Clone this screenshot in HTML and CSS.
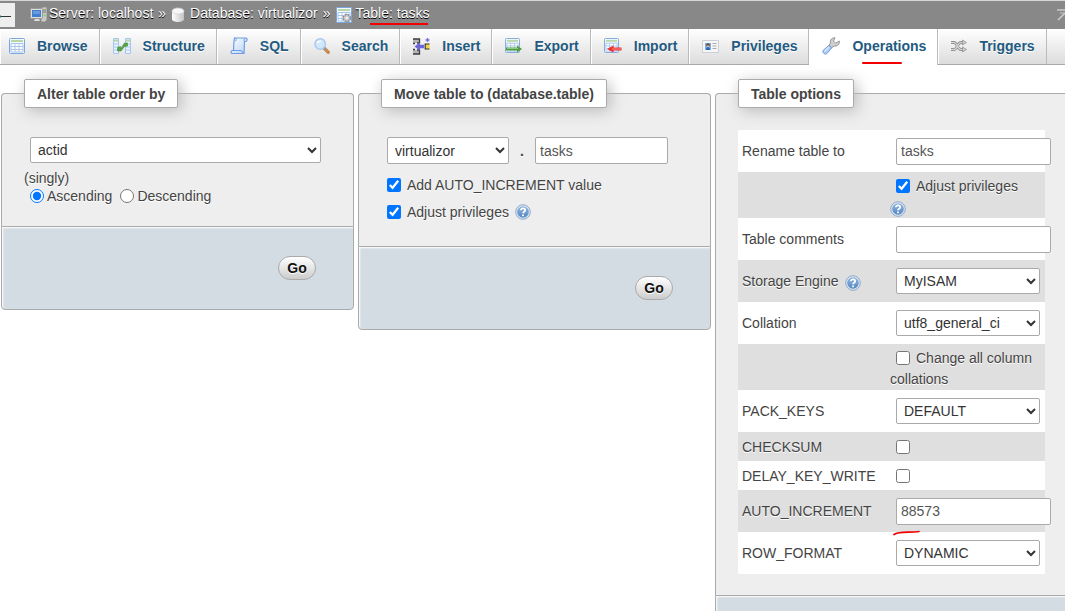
FILE: index.html
```
<!DOCTYPE html>
<html lang="en">
<head>
<meta charset="utf-8">
<title>Table: tasks - Operations</title>
<link rel="stylesheet" href="styles.css">
</head>
<body>
<svg class="defs" aria-hidden="true">
  <defs>
    <linearGradient id="helpFill" x1="0" y1="0" x2="0" y2="1"><stop offset="0" stop-color="#8fb5e0"/><stop offset="1" stop-color="#5688c2"/></linearGradient>
    <linearGradient id="blueFill" x1="0" y1="0" x2="1" y2="1"><stop offset="0" stop-color="#ffffff"/><stop offset="1" stop-color="#b5d3f7"/></linearGradient>
    <linearGradient id="dbFill" x1="0" y1="0" x2="1" y2="0"><stop offset="0" stop-color="#ffffff"/><stop offset="1" stop-color="#c4c4c4"/></linearGradient>
    <symbol id="help" viewBox="0 0 16 16">
      <circle cx="8" cy="8" r="7.3" fill="#dce7f3" stroke="#8fa9c9"/>
      <circle cx="8" cy="8" r="5.8" fill="url(#helpFill)"/>
      <path d="M5.8 6.3C5.8 3.7 10.2 3.7 10.2 6.3C10.2 7.8 8 7.7 8 9.3" fill="none" stroke="#fff" stroke-width="1.7"/>
      <rect x="7.1" y="10.5" width="1.8" height="1.7" fill="#fff"/>
    </symbol>
    <symbol id="grid" viewBox="0 0 16 16">
      <rect x=".5" y=".5" width="15" height="15" rx="1" fill="#f4f9ff" stroke="#7ba7dc"/>
      <rect x="2" y="2" width="12" height="2" fill="#b9d6a6"/>
      <path d="M2 5.5h12v8.5H2zM2 8.5h12M2 11.5h12M6 5.5v8.5M10 5.5v8.5" fill="#fff" stroke="#a9c6ea"/>
    </symbol>
  </defs>
</svg>
<div class="page">
  <header class="topbar">
    <a class="back" href="#" aria-label="Hide navigation panel">
      <svg width="15" height="24" viewBox="0 0 15 24"><path d="M0 13.5h11" stroke="#333"/><path d="M0 12.5h1v2H0z" fill="#1d7f8f"/></svg>
    </a>
    <nav class="crumbs" aria-label="Breadcrumb">
      <svg width="18" height="16" viewBox="0 0 18 16"><path d="M11 1l2-1h4v13l-2 2h-4z" fill="#c9c9c3" stroke="#85857e" stroke-width=".7"/><path d="M13 3h3M13 5h3" stroke="#777"/><circle cx="14.7" cy="8.5" r=".8" fill="#5d4"/><rect x=".5" y="1.5" width="12" height="10" rx="1" fill="#dededa" stroke="#999"/><rect x="2" y="3" width="9" height="7" fill="#3f7fcd"/><path d="M3 4h7v3H3z" fill="#659bdc"/><path d="M5 12h4l1 2H4z" fill="#ddd"/></svg>
      <a class="server" href="#">Server: localhost</a><span class="sep">»</span>
      <svg class="db" width="14" height="16" viewBox="0 0 14 16"><path d="M1 4v8c0 4 12 4 12 0V4z" fill="url(#dbFill)"/><ellipse cx="7" cy="4" rx="6" ry="3" fill="#f7f7f7" stroke="#d0d0d0" stroke-width=".7"/></svg>
      <a href="#">Database: virtualizor</a><span class="sep">»</span>
      <svg width="16" height="16" viewBox="0 0 16 16"><use href="#grid"/><circle cx="10.8" cy="11" r="3.4" fill="#c7c7c7" stroke="#888" stroke-width="1.8" stroke-dasharray="1.8 .9"/><circle cx="10.8" cy="11" r="2.8" fill="#c7c7c7"/><circle cx="10.8" cy="11" r="1.2" fill="#f5f5f5"/></svg>
      <a class="marked" href="#">Table: tasks<svg class="mark" width="60" height="4" viewBox="0 0 60 4"><path d="M1 2h58" stroke="#f20000" stroke-width="2"/></svg></a>
    </nav>
    <a class="totop" href="#" aria-label="Collapse"><svg width="8" height="12" viewBox="0 0 8 12"><path d="M0 1h8M1 11l7-7" stroke="#c8c8c8" stroke-width="1.6"/><path d="M3 4h5" stroke="#c8c8c8"/></svg></a>
  </header>

  <nav class="tabs" aria-label="Table">
    <a class="tab first" href="#"><svg width="16" height="16"><use href="#grid"/></svg>Browse</a>
    <a class="tab" href="#"><svg width="18" height="16" viewBox="0 0 18 16"><path d="M.5.5h5v15h-5zM12.5.5h5v15h-5z" fill="#eaf3ff" stroke="#a5c7ef"/><path d="M1 2.5h4M13 2.5h4" stroke="#b4d69a" stroke-width="2"/><path d="M1 6h4M1 9h4M1 12h4M13 6h4M13 9h4M13 12h4" stroke="#a5c7ef"/><path d="M4.5 13V9.5l3-1v2.5l4-6h3V8l-3 .5L8 13z" fill="#56a54b" stroke="#3f8c36" stroke-width=".6"/></svg>Structure</a>
    <a class="tab" href="#"><svg width="18" height="18" viewBox="0 0 18 18"><path d="M4.5 1h11.5c1.5 0 1.5 3.5-.5 3.5h-1L14 16.5H2.5c-2 0-1.7-3 0-3h1L4 4z" fill="url(#blueFill)" stroke="#6e9be4" stroke-width="1.2"/><path d="M4.5 1C7 1 6.5 4 5 4M14.5 4.5c-1-1-.5-3 1-3M2.5 13.5H11c1.5 0 1 3 3 3" fill="none" stroke="#6e9be4"/></svg>SQL</a>
    <a class="tab" href="#"><svg width="16" height="16" viewBox="0 0 16 16"><path d="M10 10l4.2 4.2" stroke="#c98b51" stroke-width="3.4" stroke-linecap="round"/><path d="M9.5 9.5l2 2" stroke="#999" stroke-width="2"/><circle cx="6.2" cy="6" r="5.2" fill="#d3e7fb" stroke="#a9c9ed" stroke-width="1.5"/><path d="M3.3 5.3c.5-1.5 2-2.3 3.5-2" stroke="#fff" stroke-width="1.4" fill="none"/></svg>Search</a>
    <a class="tab" href="#"><svg width="17" height="17" viewBox="0 0 17 17"><path d="M0 1h6.5v4H0zM0 12h6.5v4H0z" fill="#b5b5b5"/><path d="M0 1h6.5v4H4M0 16h6.5v-4H4M0 5.5h2M0 11.5h2" fill="none" stroke="#3c3c3c" stroke-width="1.3"/><path d="M1.5 8.5l5.500-4.200v2.500h4v3.400H7v2.500z" fill="#6a65d8"/><path d="M16.500 6h-4.300v5h4.300" fill="#f2d447" stroke="#333" stroke-width="1.200"/><path d="M14.500 0v4M12.500 2h4" stroke="#7670dd" stroke-width="1.400"/></svg>Insert</a>
    <a class="tab" href="#"><svg width="17" height="16" viewBox="0 0 17 16"><use href="#grid" width="15" height="15"/><path d="M1 9.500h11V7.500l5 3.500-5 3.500v-2H1z" fill="#4e9d45"/><path d="M2 10.500h11" stroke="#90c983"/></svg>Export</a>
    <a class="tab" href="#"><svg width="18" height="16" viewBox="0 0 18 16"><use href="#grid" width="15" height="15"/><path d="M17.500 9.500h-8V7.500L3 11l6.500 3.500v-2h8z" fill="#f02f2f"/><path d="M8 11h9" stroke="#fff" stroke-opacity=".45"/></svg>Import</a>
    <a class="tab" href="#"><svg width="17" height="16" viewBox="0 0 17 16"><path d="M.5 2.500h16v12H.5z" fill="#f5f6f8" stroke="#ccd0d5"/><rect x="3" y="5" width="6" height="7" fill="#7aafe9"/><circle cx="6" cy="7" r="1.800" fill="#744724"/><path d="M5 7.400h2v1.500H5z" fill="#f1be91"/><path d="M4 12c0-4 4-4 4 0z" fill="#2e65b1"/><path d="M10.500 5.500h4M10.500 8h4M10.500 10.500h4" stroke="#aaa"/></svg>Privileges</a>
    <a class="tab active" href="#"><svg width="18" height="18" viewBox="0 0 18 18"><path d="M8.500 6C7.500 3 10 .5 13 .8L11.500 4l2 2.200L17.300 4C18 7.500 15 9.700 12.200 9L9.700 10.800 7.200 8z" fill="#cfcfcf" stroke="#858585" stroke-width=".8"/><path d="M7 8.300l2.700 2.600-4.500 5.400c-2 2-5.500-.4-4-3z" fill="#a9cbf6" stroke="#6c95d2" stroke-width=".9"/><path d="M7 10l-4.500 4.500" stroke="#e0edff" stroke-width="1.300"/></svg>Operations<svg class="mark" width="40" height="4" viewBox="0 0 40 4"><path d="M1 2h38" stroke="#f20000" stroke-width="2" stroke-linecap="round"/></svg></a>
    <a class="tab" href="#"><svg width="16" height="16" viewBox="0 0 16 16"><path d="M0 4.500h3c3.500 0 3 7 7 7h2M0 11.500h3c3.500 0 3-7 7-7h2" fill="none" stroke="#929292" stroke-width="2.800"/><path d="M0 4.500h3c3.500 0 3 7 7 7h2M0 11.500h3c3.500 0 3-7 7-7h2" fill="none" stroke="#d8d8d8" stroke-width="1.200"/><path d="M11.500 2l4 2.500-4 2.500zM11.500 9l4 2.500-4 2.500z" fill="#cecece" stroke="#949494" stroke-width=".8"/></svg>Triggers</a>
  </nav>

  <main class="panels">
    <form class="panel">
      <fieldset class="box">
        <legend>Alter table order by</legend>
        <div class="controls">
          <select class="wide" aria-label="Order column"><option>actid</option></select>
          <div class="line">(singly)</div>
          <div class="radios">
            <input type="radio" name="dir" id="asc" checked><label for="asc">Ascending</label>
            <input type="radio" name="dir" id="desc"><label for="desc">Descending</label>
          </div>
        </div>
      </fieldset>
      <div class="footer"><button type="button">Go</button></div>
    </form>

    <form class="panel">
      <fieldset class="box">
        <legend>Move table to (database.table)</legend>
        <div class="controls">
          <div class="target">
            <select aria-label="Database"><option>virtualizor</option></select>
            <strong>.</strong>
            <input type="text" aria-label="Table name" value="tasks">
          </div>
          <div class="check"><input type="checkbox" id="ai" checked><label for="ai">Add AUTO_INCREMENT value</label></div>
          <div class="check"><input type="checkbox" id="adj" checked><label for="adj">Adjust privileges</label><svg class="help" width="16" height="16"><use href="#help"/></svg></div>
        </div>
      </fieldset>
      <div class="footer"><button type="button">Go</button></div>
    </form>

    <form class="panel">
      <fieldset class="box">
        <legend>Table options</legend>
        <table>
          <tr><td><label for="rename">Rename table to</label></td><td><input type="text" id="rename" value="tasks"></td></tr>
          <tr class="two"><td></td><td><input type="checkbox" id="adj2" checked><label for="adj2">Adjust privileges</label><br><svg class="help" width="16" height="16"><use href="#help"/></svg></td></tr>
          <tr><td><label for="comments">Table comments</label></td><td><input type="text" id="comments"></td></tr>
          <tr><td><label for="engine">Storage Engine</label><svg class="help" width="16" height="16"><use href="#help"/></svg></td><td><select id="engine"><option>MyISAM</option></select></td></tr>
          <tr><td><label for="collation">Collation</label></td><td><select id="collation"><option>utf8_general_ci</option></select></td></tr>
          <tr class="two"><td></td><td><input type="checkbox" id="cols"><label for="cols">Change all column collations</label></td></tr>
          <tr><td><label for="pack">PACK_KEYS</label></td><td><select id="pack"><option>DEFAULT</option></select></td></tr>
          <tr class="short"><td><label for="checksum">CHECKSUM</label></td><td><input type="checkbox" id="checksum"></td></tr>
          <tr class="short"><td><label for="delay">DELAY_KEY_WRITE</label></td><td><input type="checkbox" id="delay"></td></tr>
          <tr><td><label for="auto">AUTO_INCREMENT</label></td><td class="marked"><input type="text" id="auto" value="88573"><svg class="mark" width="28" height="6" viewBox="0 0 28 6"><path d="M1 4.500C6 1 17 3 26 1.500" fill="none" stroke="#f20000" stroke-width="1.700" stroke-linecap="round"/></svg></td></tr>
          <tr><td><label for="format">ROW_FORMAT</label></td><td><select id="format"><option>DYNAMIC</option></select></td></tr>
        </table>
      </fieldset>
      <div class="footer"></div>
    </form>
  </main>
</div>
</body>
</html>
```
FILE: styles.css
```
* {
  box-sizing: border-box;
}

body {
  margin: 0;
  background: #fff;
  color: #444;
  font: 14px/18px "Liberation Sans", Arial, sans-serif;
}

a {
  color: inherit;
  text-decoration: none;
}

svg {
  flex: none;
}

.defs {
  position: absolute;
  width: 0;
  height: 0;
}

.page {
  height: 100vh;
  overflow: hidden;
}

.topbar {
  display: flex;
  align-items: center;
  height: 29px;
  padding-bottom: 1px;
  border-top: 1px solid #d5d7da;
  background: #888;
  color: #fff;
  text-shadow: 0 1px 0 #000;
}

.back {
  display: flex;
  width: 15px;
  height: 24px;
  background: #eee;
}

.crumbs {
  display: flex;
  flex: 1;
  align-items: center;
  margin-left: 15px;
  white-space: nowrap;
}

.crumbs a,
.crumbs .sep {
  padding-bottom: 3px;
  line-height: 20px;
}

.crumbs .server {
  margin-left: 1px;
}

.crumbs .sep {
  margin: 0 5px;
}

.crumbs .db {
  margin-right: 5px;
}

.crumbs .marked {
  margin-left: 4px;
}

.marked {
  position: relative;
}

.mark {
  position: absolute;
}

.crumbs .mark {
  left: 13px;
  bottom: 0;
}

.totop {
  display: flex;
}

.tabs {
  display: flex;
  height: 36px;
  border-bottom: 1px solid #aaa;
  background: linear-gradient(#fff, #dcdcdc);
}

.tab {
  display: flex;
  align-items: center;
  gap: 12px;
  padding: 0 11px 1px 12px;
  border-right: 1px solid #bbb;
  border-left: 1px solid #fff;
  color: #235a81;
  font-weight: bold;
  text-shadow: 0 1px 0 #fff;
  white-space: nowrap;
}

.tab.first {
  padding-left: 8px;
}

.tab.active {
  position: relative;
  margin-bottom: -1px;
  padding-bottom: 2px;
  background: #fff;
}

.tab .mark {
  left: 52px;
  bottom: 0;
}

.panels {
  display: flex;
  align-items: flex-start;
  gap: 4px;
  padding: 14px 0 0 1px;
}

.panel {
  flex: none;
  width: calc((100% + 1px) / 3 - 2px);
}

.box {
  min-width: 0;
  margin: 0;
  padding: 0 22px 21px;
  border: 1px solid #aaa;
  border-bottom: 0;
  border-radius: 4px 4px 0 0;
  background: #eee;
  text-shadow: 0 1px 0 #fff;
}

legend {
  height: 29px;
  padding: 0 12px;
  border: 1px solid #aaa;
  border-radius: 2px;
  background: #fff;
  box-shadow: 3px 3px 15px #bbb;
  font-weight: bold;
  line-height: 28px;
}

.controls {
  padding-top: 29px;
}

select,
input[type="text"] {
  display: block;
  height: 27px;
  margin: 0 6px;
  border: 1px solid #aaa;
  border-radius: 2px;
  background: #fff;
  color: #333;
  font: inherit;
}

select {
  height: 26px;
  padding: 0 3px;
}

input[type="text"] {
  padding: 0 4px;
  color: #555;
}

.wide {
  width: calc(100% - 16px);
}

.line {
  margin-top: 6px;
}

.radios,
.check {
  display: flex;
  align-items: center;
}

.radios {
  height: 18px;
}

.radios input {
  margin: 0 3px 0 6px;
}

.radios label {
  margin-right: 2px;
}

.target {
  display: flex;
  align-items: center;
}

.target select {
  width: 122px;
  height: 27px;
}

.target strong {
  width: 14px;
  text-align: center;
}

.target input[type="text"] {
  width: 133px;
}

.check {
  height: 27px;
}

.target + .check {
  margin-top: 7px;
}

input[type="checkbox"] {
  width: 14px;
  height: 14px;
  margin: 0 6px;
}

input[type="radio"] {
  width: 14px;
  height: 14px;
}

.help {
  margin-left: 6px;
  vertical-align: -5px;
}

.footer {
  display: flex;
  justify-content: flex-end;
  height: 84px;
  padding: 29px 37px;
  border: 1px solid #aaa;
  border-radius: 0 0 4px 4px;
  background: #d3dce3;
  box-shadow: inset 1px 1px 2px #fff;
}

button {
  width: 38px;
  height: 24px;
  padding: 0;
  border: 1px solid #aaa;
  border-radius: 12px;
  background: linear-gradient(#fff, #ccc);
  color: #111;
  font: bold 14px/18px "Liberation Sans", Arial, sans-serif;
  text-shadow: 0 1px 0 #fff;
}

table {
  width: 100%;
  margin-top: 22px;
  border-collapse: collapse;
  table-layout: fixed;
}

tr {
  height: 42px;
  background: #fff;
}

tr:nth-child(even) {
  background: #dfdfdf;
}

td {
  padding: 0 4px;
}

td:first-child {
  width: 148px;
  white-space: nowrap;
}

td select {
  width: 144px;
}

td input[type="text"] {
  width: 155px;
}

td input[type="checkbox"] {
  vertical-align: -2px;
}

.two {
  height: 46px;
  line-height: 21px;
}

.two td {
  padding-top: 4px;
}

.two .help {
  margin-left: 0;
}

.short {
  height: 29px;
}

td .mark {
  left: 7px;
  bottom: -4px;
}
```
